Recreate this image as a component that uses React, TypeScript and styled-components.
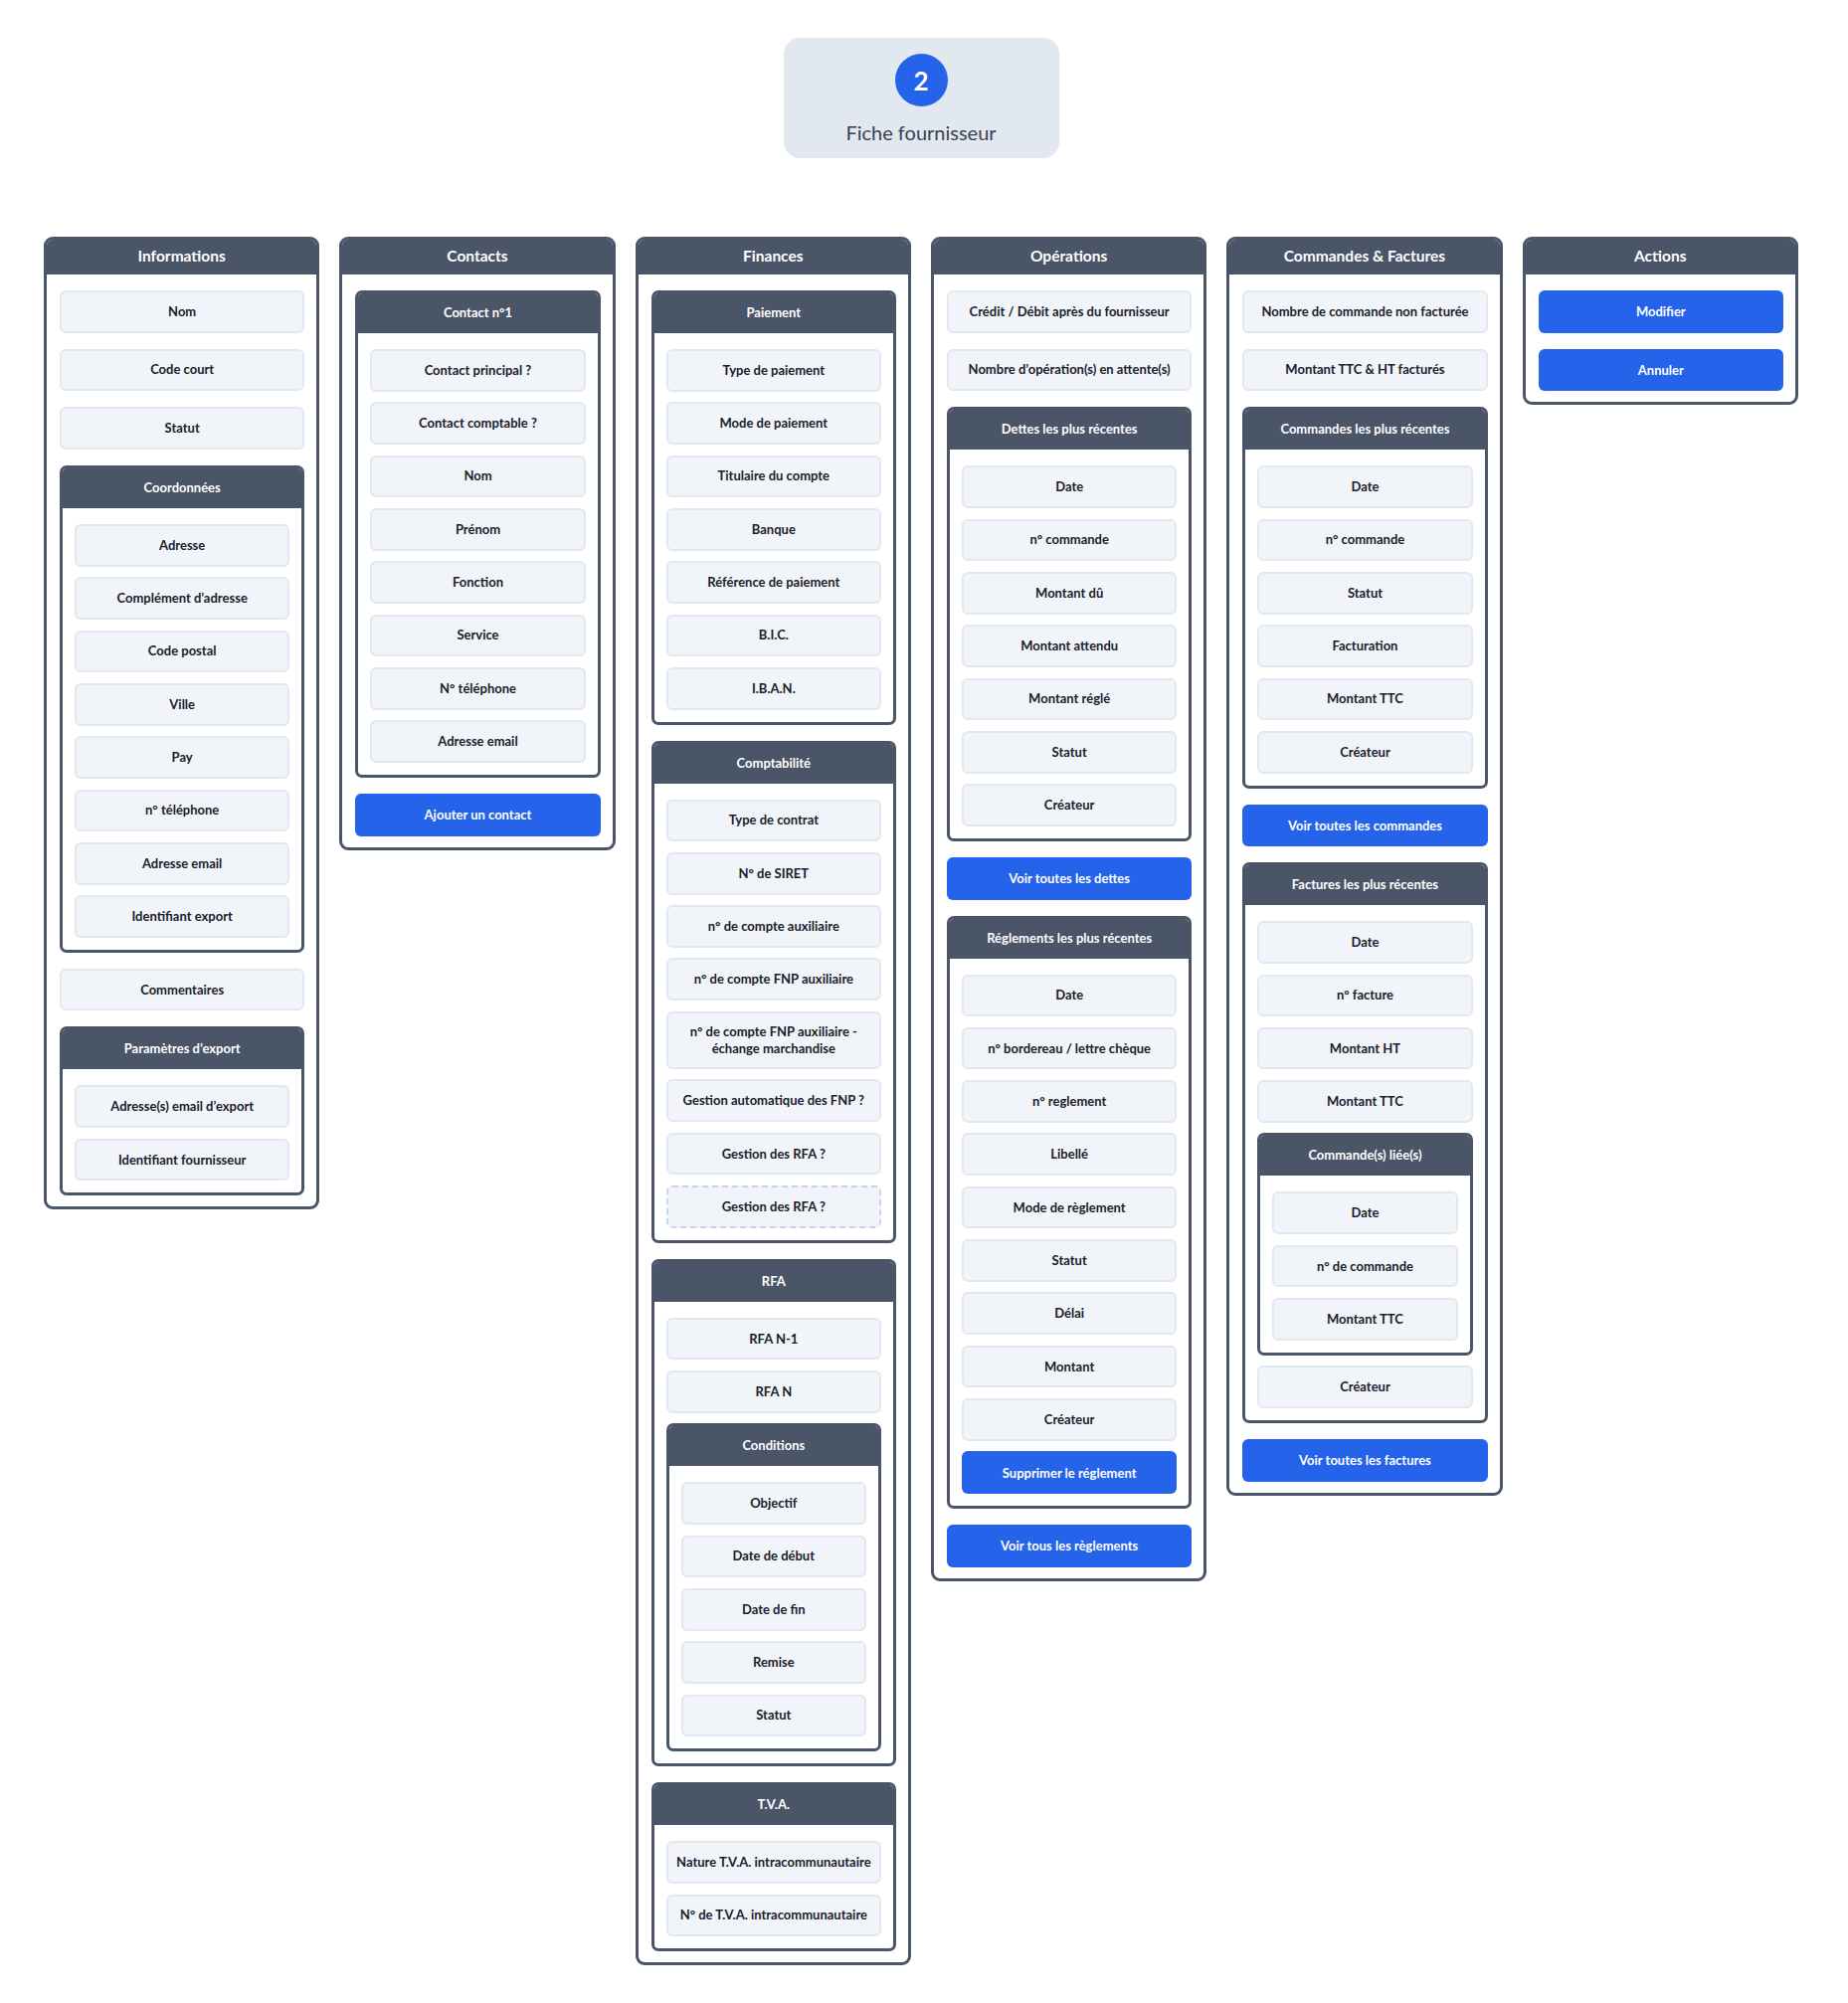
import React from "react";
import styled, { createGlobalStyle, css } from "styled-components";

const GlobalStyle = createGlobalStyle`
  html, body {
    margin: 0;
    padding: 0;
    background: #ffffff;
  }
  body {
    font-family: Lato, "Open Sans", "Noto Sans", sans-serif;
    color: #1e293b;
    -webkit-font-smoothing: antialiased;
  }
  * {
    box-sizing: border-box;
  }
`;

const SLATE = "#4a5568";
const BLUE = "#2563eb";

type Node =
  | { kind: "field"; label: string; dashed?: boolean }
  | { kind: "button"; label: string }
  | { kind: "group"; title: string; children: Node[] };

type ColumnSpec = { title: string; children: Node[] };

const f = (label: string, dashed?: boolean): Node => ({ kind: "field", label, dashed });
const b = (label: string): Node => ({ kind: "button", label });
const g = (title: string, children: Node[]): Node => ({ kind: "group", title, children });

const columns: ColumnSpec[] = [
  {
    title: "Informations",
    children: [
      f("Nom"),
      f("Code court"),
      f("Statut"),
      g("Coordonnées", [
        f("Adresse"),
        f("Complément d’adresse"),
        f("Code postal"),
        f("Ville"),
        f("Pay"),
        f("n° téléphone"),
        f("Adresse email"),
        f("Identifiant export"),
      ]),
      f("Commentaires"),
      g("Paramètres d’export", [f("Adresse(s) email d’export"), f("Identifiant fournisseur")]),
    ],
  },
  {
    title: "Contacts",
    children: [
      g("Contact n°1", [
        f("Contact principal ?"),
        f("Contact comptable ?"),
        f("Nom"),
        f("Prénom"),
        f("Fonction"),
        f("Service"),
        f("N° téléphone"),
        f("Adresse email"),
      ]),
      b("Ajouter un contact"),
    ],
  },
  {
    title: "Finances",
    children: [
      g("Paiement", [
        f("Type de paiement"),
        f("Mode de paiement"),
        f("Titulaire du compte"),
        f("Banque"),
        f("Référence de paiement"),
        f("B.I.C."),
        f("I.B.A.N."),
      ]),
      g("Comptabilité", [
        f("Type de contrat"),
        f("N° de SIRET"),
        f("n° de compte auxiliaire"),
        f("n° de compte FNP auxiliaire"),
        f("n° de compte FNP auxiliaire -\néchange marchandise"),
        f("Gestion automatique des FNP ?"),
        f("Gestion des RFA ?"),
        f("Gestion des RFA ?", true),
      ]),
      g("RFA", [
        f("RFA N-1"),
        f("RFA N"),
        g("Conditions", [f("Objectif"), f("Date de début"), f("Date de fin"), f("Remise"), f("Statut")]),
      ]),
      g("T.V.A.", [f("Nature T.V.A. intracommunautaire"), f("N° de T.V.A. intracommunautaire")]),
    ],
  },
  {
    title: "Opérations",
    children: [
      f("Crédit / Débit après du fournisseur"),
      f("Nombre d’opération(s) en attente(s)"),
      g("Dettes les plus récentes", [
        f("Date"),
        f("n° commande"),
        f("Montant dû"),
        f("Montant attendu"),
        f("Montant réglé"),
        f("Statut"),
        f("Créateur"),
      ]),
      b("Voir toutes les dettes"),
      g("Réglements les plus récentes", [
        f("Date"),
        f("n° bordereau / lettre chèque"),
        f("n° reglement"),
        f("Libellé"),
        f("Mode de règlement"),
        f("Statut"),
        f("Délai"),
        f("Montant"),
        f("Créateur"),
        b("Supprimer le réglement"),
      ]),
      b("Voir tous les règlements"),
    ],
  },
  {
    title: "Commandes & Factures",
    children: [
      f("Nombre de commande non facturée"),
      f("Montant TTC & HT facturés"),
      g("Commandes les plus récentes", [
        f("Date"),
        f("n° commande"),
        f("Statut"),
        f("Facturation"),
        f("Montant TTC"),
        f("Créateur"),
      ]),
      b("Voir toutes les commandes"),
      g("Factures les plus récentes", [
        f("Date"),
        f("n° facture"),
        f("Montant HT"),
        f("Montant TTC"),
        g("Commande(s) liée(s)", [f("Date"), f("n° de commande"), f("Montant TTC")]),
        f("Créateur"),
      ]),
      b("Voir toutes les factures"),
    ],
  },
  {
    title: "Actions",
    children: [b("Modifier"), b("Annuler")],
  },
];

/* ---------- page frame ---------- */

const Page = styled.div`
  width: 1764px;
  padding: 38px 0 60px 44px;
  box-sizing: content-box;
  display: flex;
  flex-direction: column;
  align-items: center;
  gap: 79px;
`;

const StepCard = styled.div`
  width: 277px;
  height: 121px;
  background: #e2e8f0;
  border-radius: 16px;
  display: flex;
  flex-direction: column;
  align-items: center;
  padding-top: 16px;
  gap: 13px;
`;

const StepBadge = styled.div`
  width: 53px;
  height: 53px;
  border-radius: 50%;
  background: ${BLUE};
  color: #ffffff;
  display: flex;
  align-items: center;
  justify-content: center;
  font-size: 26px;
  font-weight: 700;
`;

const StepLabel = styled.div`
  font-size: 20px;
  line-height: 26px;
  color: #374151;
  font-weight: 400;
`;

const Board = styled.div`
  width: 100%;
  display: grid;
  grid-template-columns: repeat(6, 277.33px);
  column-gap: 20px;
  align-items: start;
`;

/* ---------- columns & groups ---------- */

const Column = styled.section`
  border: 3px solid ${SLATE};
  border-radius: 9px;
  background: #ffffff;
  overflow: hidden;
`;

const ColumnTitle = styled.h2`
  margin: 0;
  height: 35px;
  padding-bottom: 3px;
  background: ${SLATE};
  color: #ffffff;
  font-size: 15.5px;
  font-weight: 700;
  display: flex;
  align-items: center;
  justify-content: center;
`;

const Stack = styled.div<{ $nested: boolean }>`
  display: flex;
  flex-direction: column;
  ${({ $nested }) =>
    $nested
      ? css`
          gap: 10.67px;
          padding: 16px 12px 12px;
        `
      : css`
          gap: 16px;
          padding: 16px 12px 11px 13px;
        `}
`;

const Group = styled.div`
  border: 3px solid ${SLATE};
  border-radius: 7px;
  background: #ffffff;
  overflow: hidden;
`;

const GroupTitle = styled.h3`
  margin: 0;
  height: 40px;
  padding-bottom: 2px;
  background: ${SLATE};
  color: #ffffff;
  font-size: 13px;
  font-weight: 700;
  display: flex;
  align-items: center;
  justify-content: center;
`;

const Field = styled.div<{ $dashed?: boolean }>`
  min-height: 42.67px;
  padding: 10px 8px;
  background: #f1f5f9;
  border: 2px ${({ $dashed }) => ($dashed ? "dashed #cbd5e1" : "solid #e2e8f0")};
  border-radius: 6px;
  display: flex;
  align-items: center;
  justify-content: center;
  text-align: center;
  white-space: pre-line;
  font-size: 13px;
  line-height: 17px;
  font-weight: 700;
  color: #1a202c;
`;

const ActionButton = styled.button`
  min-height: 42.67px;
  border: none;
  border-radius: 6px;
  background: ${BLUE};
  color: #ffffff;
  font-family: inherit;
  font-size: 13px;
  font-weight: 700;
  cursor: pointer;
  padding: 0 8px;
`;

function renderNodes(nodes: Node[], nested: boolean) {
  return (
    <Stack $nested={nested}>
      {nodes.map((node, i) => {
        if (node.kind === "field") {
          return (
            <Field key={i} $dashed={node.dashed}>
              {node.label}
            </Field>
          );
        }
        if (node.kind === "button") {
          return <ActionButton key={i}>{node.label}</ActionButton>;
        }
        return (
          <Group key={i}>
            <GroupTitle>{node.title}</GroupTitle>
            {renderNodes(node.children, true)}
          </Group>
        );
      })}
    </Stack>
  );
}

export default function App() {
  return (
    <>
      <GlobalStyle />
      <Page>
        <StepCard>
          <StepBadge>2</StepBadge>
          <StepLabel>Fiche fournisseur</StepLabel>
        </StepCard>
        <Board>
          {columns.map((col) => (
            <Column key={col.title}>
              <ColumnTitle>{col.title}</ColumnTitle>
              {renderNodes(col.children, false)}
            </Column>
          ))}
        </Board>
      </Page>
    </>
  );
}
